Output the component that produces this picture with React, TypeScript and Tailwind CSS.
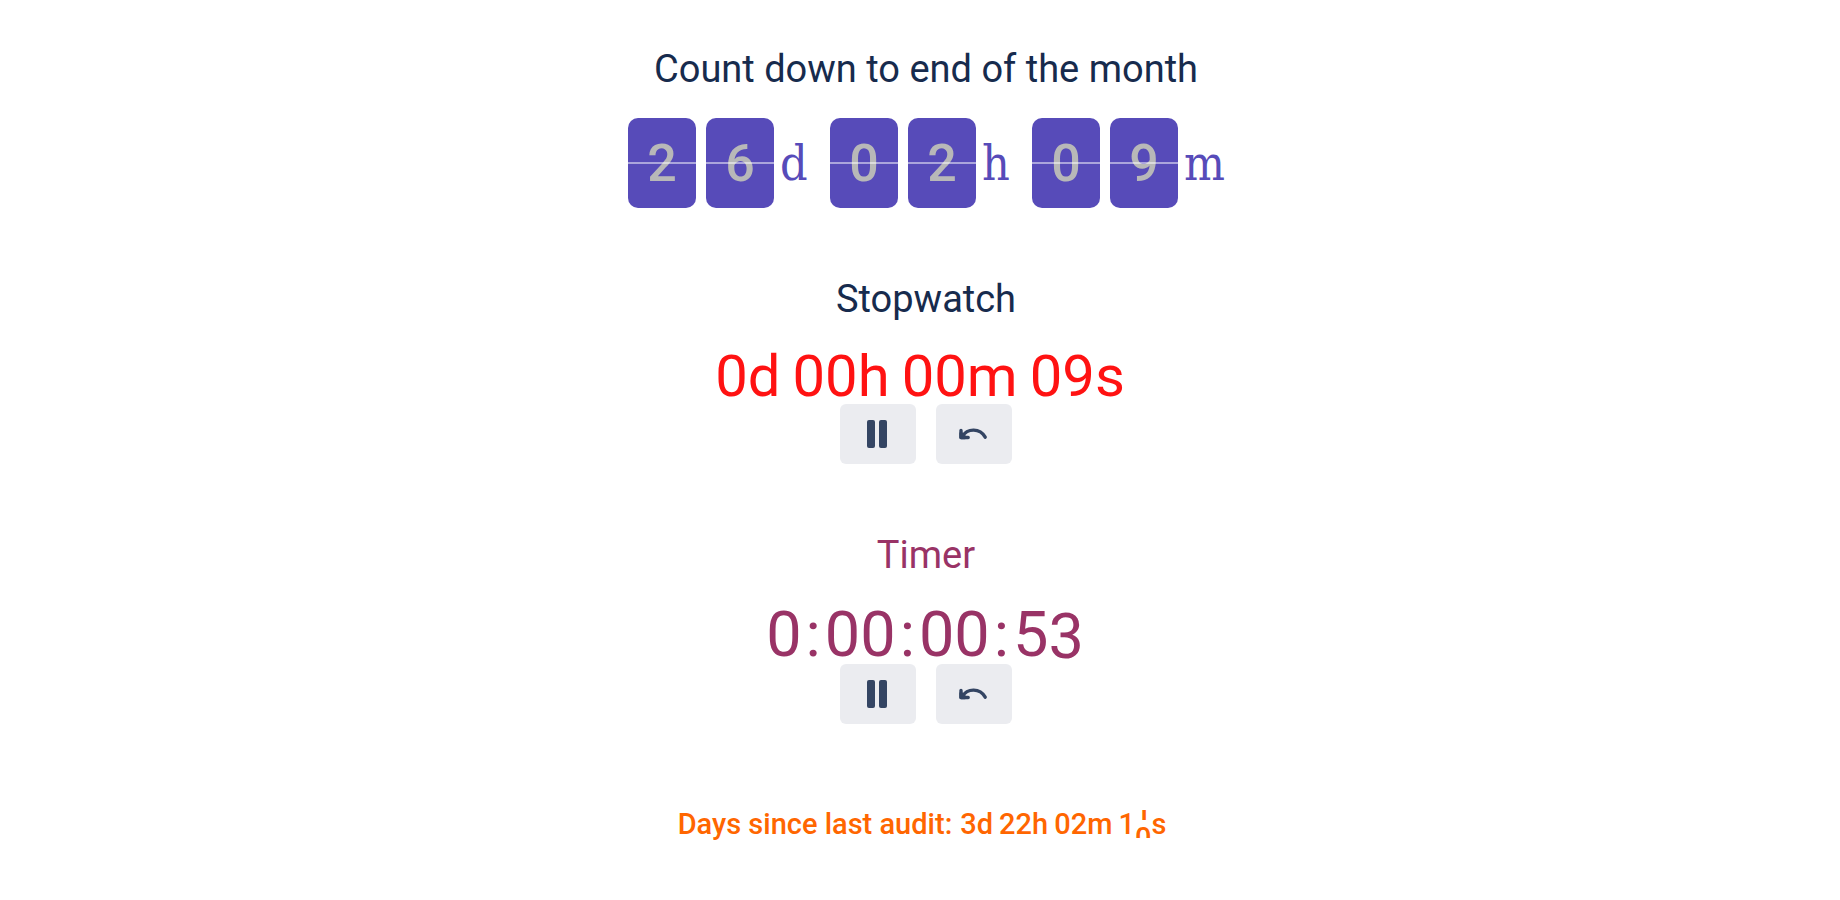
import React from 'react';

const countdown = [
  { digits: ['2', '6'], unit: 'd' },
  { digits: ['0', '2'], unit: 'h' },
  { digits: ['0', '9'], unit: 'm' },
];

const stopwatch = ['0d', '00h', '00m', '09s'];
const timer = ['0', '00', '00'];
const audit = ['3d', '22h', '02m'];

function FlipCard({ digit }: { digit: string }) {
  return (
    <div className="relative flex h-[90px] w-[68px] items-center justify-center rounded-[10px] bg-[#574bb9] pt-0.5 text-[52px] leading-none font-medium text-[#b8b8b8]">
      {digit}
      {/* Hinge */}
      <div className="absolute inset-x-0 top-11 h-0.5 bg-white/50" />
    </div>
  );
}

function Controls({ name }: { name: string }) {
  return (
    <div className="flex gap-5">
      <button
        type="button"
        aria-label={`Pause ${name}`}
        className="flex h-[60px] w-[76px] items-center justify-center rounded-md bg-[#ebecf0] text-[#344563]"
      >
        <svg width="48" height="48" viewBox="0 0 48 48" fill="currentColor">
          <rect x="13" y="10" width="8" height="28" rx="2" />
          <rect x="25" y="10" width="8" height="28" rx="2" />
        </svg>
      </button>
      <button
        type="button"
        aria-label={`Reset ${name}`}
        className="flex h-[60px] w-[76px] items-center justify-center rounded-md bg-[#ebecf0] text-[#344563]"
      >
        <svg
          width="48"
          height="48"
          viewBox="0 0 48 48"
          fill="none"
          stroke="currentColor"
          strokeWidth="3.4"
          strokeLinecap="round"
          strokeLinejoin="round"
        >
          <path d="M11 20.5v7h7.200" />
          <path d="M12.500 26.200C17 18.800 29.500 17.200 35.200 27.200" />
          <path d="M11 23.500v4h4z" fill="currentColor" />
        </svg>
      </button>
    </div>
  );
}

export default function App() {
  return (
    <main className="flex flex-col items-center bg-white pt-11 pb-14 pl-3 font-['Roboto',sans-serif] text-[#172b4d]">
      <section className="flex flex-col items-center">
        <h2 className="text-[38px] leading-[50px]">Count down to end of the month</h2>
        <div className="mt-6 flex gap-2.5">
          {countdown.map(({ digits, unit }) => (
            <div key={unit} className="flex gap-2.5">
              {digits.map((digit, i) => (
                <FlipCard key={i} digit={digit} />
              ))}
              <span className="-ml-1 flex w-10 items-center justify-start font-['DejaVu_Serif_Condensed','DejaVu_Serif',serif] text-[48px] leading-none text-[#574bb9]">
                {unit}
              </span>
            </div>
          ))}
        </div>
      </section>

      <section className="mt-[66px] flex flex-col items-center">
        <h2 className="text-[38px] leading-[50px]">Stopwatch</h2>
        <div className="mt-[22px] -mb-0.5 flex gap-3 pr-3 text-[58px] leading-[60px] text-[#ff1212]">
          {stopwatch.map((part) => (
            <span key={part}>{part}</span>
          ))}
        </div>
        <Controls name="stopwatch" />
      </section>

      <section className="mt-[66px] flex flex-col items-center text-[#993366]">
        <h2 className="text-[38px] leading-[50px]">Timer</h2>
        <div className="mt-[22px] -mb-1 flex pr-0.5 text-[63px] leading-[66px]">
          {timer.map((part, i) => (
            <React.Fragment key={i}>
              <span>{part}</span>
              <span className="px-1">:</span>
            </React.Fragment>
          ))}
          <span>5</span>
          {/* Last digit is still rolling into place */}
          <span className="mt-0.5 -mb-0.5">3</span>
        </div>
        <Controls name="timer" />
      </section>

      <section className="mt-20 flex h-10 items-center gap-2 pr-2 text-[29px] leading-7 font-medium text-[#ff6600]">
        <h3>Days since last audit:</h3>
        <div className="flex gap-1.5">
          {audit.map((part) => (
            <span key={part}>{part}</span>
          ))}
          <span className="flex">
            1
            <span className="flex h-7 flex-col overflow-hidden">
              <span className="-mt-3.5">1</span>
              <span>0</span>
            </span>
            s
          </span>
        </div>
      </section>
    </main>
  );
}
